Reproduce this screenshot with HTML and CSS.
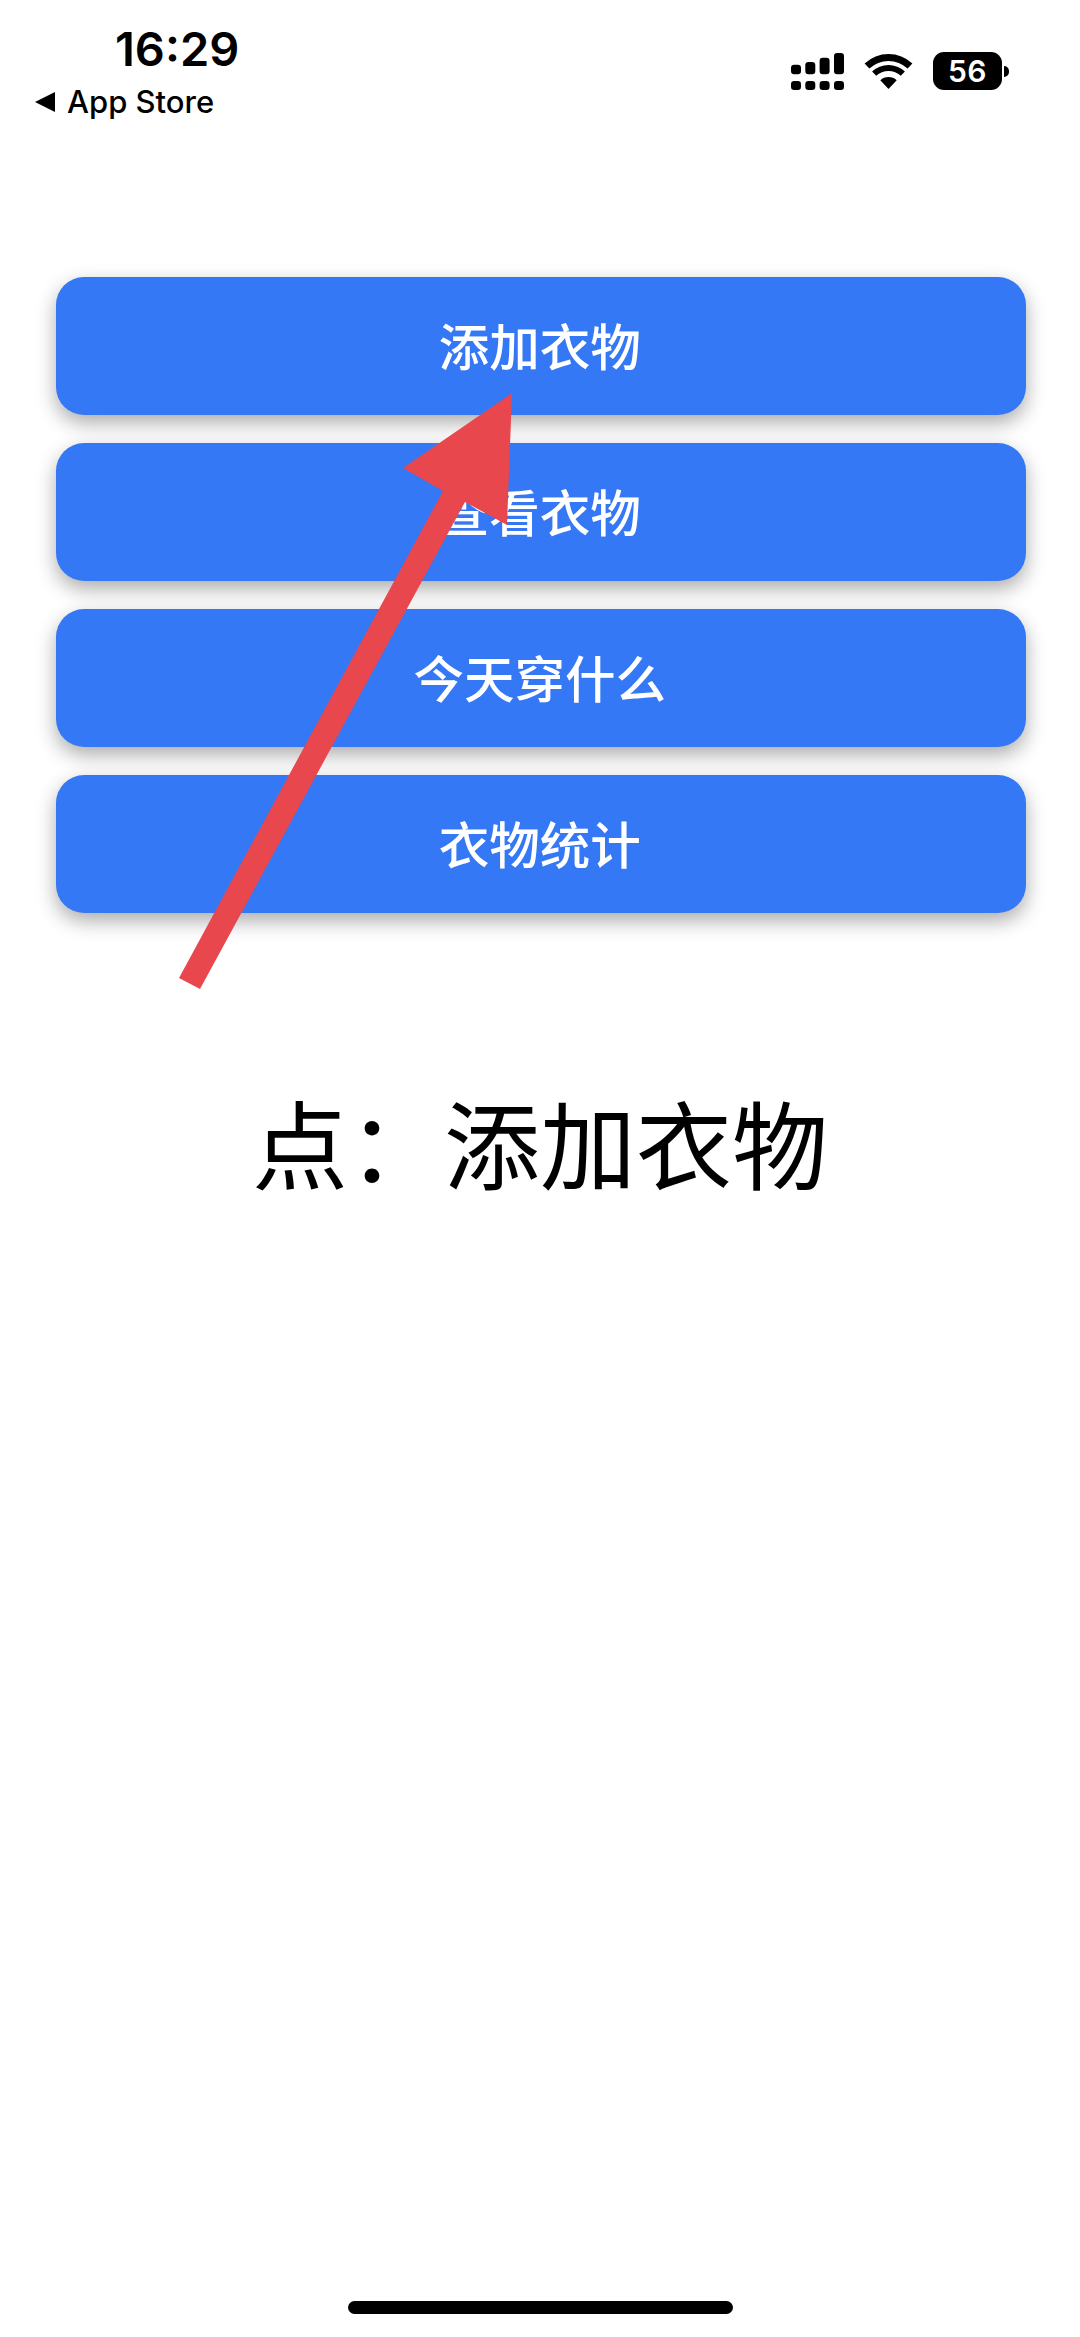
FILE: index.html
```html
<!DOCTYPE html>
<html lang="zh">
<head>
<meta charset="utf-8">
<title>衣物</title>
<link rel="stylesheet" href="styles.css">
</head>
<body>
<div class="screen">
  <header class="status">
    <div class="status-left">
      <div class="time">16:29</div>
      <div class="back"><span class="back-tri"></span><span>App Store</span></div>
    </div>
    <div class="status-right">
      <svg class="signal" viewBox="0 0 53 37" width="53" height="37" aria-hidden="true">
        <rect x="0" y="11.7" width="10" height="9.6" rx="3.2"/>
        <rect x="14.3" y="9" width="10" height="12.3" rx="3.2"/>
        <rect x="28.6" y="4.7" width="10" height="16.6" rx="3.2"/>
        <rect x="43" y="0" width="10" height="21.3" rx="3.2"/>
        <rect x="0" y="28" width="10" height="9" rx="3.2"/>
        <rect x="14.3" y="28" width="10" height="9" rx="3.2"/>
        <rect x="28.6" y="28" width="10" height="9" rx="3.2"/>
        <rect x="43" y="28" width="10" height="9" rx="3.2"/>
      </svg>
      <svg class="wifi" viewBox="0 0 47 35" width="47" height="35" aria-hidden="true">
        <path d="M-.4 9.4A35 35 0 0 1 47.4 9.4L42.6 14.5A28 28 0 0 0 4.4 14.5Z"/>
        <path d="M7.1 17.5A24 24 0 0 1 39.9 17.5L35.8 21.8A18 18 0 0 0 11.2 21.8Z"/>
        <path d="M15.3 26.2A12 12 0 0 1 31.7 26.2L23.5 35Z"/>
      </svg>
      <div class="battery"><div class="battery-body">56</div><div class="battery-nub"></div></div>
    </div>
  </header>

  <main class="menu">
    <button class="menu-btn">添加衣物</button>
    <button class="menu-btn">查看衣物</button>
    <button class="menu-btn">今天穿什么</button>
    <button class="menu-btn">衣物统计</button>
  </main>

  <p class="result">点：添加衣物</p>

  <div class="home-bar"></div>

  <svg class="arrow" viewBox="0 0 1080 2337" aria-hidden="true">
    <polygon points="179,978 200,989 465,502 507,525 512,393 403,468 443,491"/>
  </svg>
</div>
</body>
</html>
```
FILE: styles.css
```css
* { box-sizing: border-box; }
html, body { margin: 0; padding: 0; background: #fff; }
.screen {
  position: relative;
  width: 1080px;
  height: 2337px;
  display: flex;
  flex-direction: column;
  overflow: hidden;
  font-family: "Noto Sans CJK SC", "Noto Sans", sans-serif;
  color: #000;
}
.status {
  height: 277px;
  display: flex;
  justify-content: space-between;
  align-items: flex-start;
  padding: 24px 78px 0 35px;
}
.status-left { display: flex; flex-direction: column; }
.time {
  font-family: Inter, sans-serif;
  font-weight: 600;
  font-size: 47px;
  line-height: 50px;
  padding-left: 80px;
}
.back {
  display: flex;
  align-items: center;
  gap: 12px;
  margin-top: 8px;
  font-family: Inter, sans-serif;
  font-weight: 500;
  font-size: 31px;
  line-height: 40px;
}
.back-tri {
  width: 0;
  height: 0;
  border-style: solid;
  border-width: 10px 20px 10px 0;
  border-color: transparent #000 transparent transparent;
}
.status-right {
  display: flex;
  align-items: center;
  margin-top: 28px;
  gap: 21px;
}
.signal, .wifi { display: block; fill: #000; }
.wifi { overflow: visible; }
.battery { display: flex; align-items: center; gap: 2px; }
.battery-body {
  width: 69px;
  height: 38px;
  border-radius: 11px;
  background: #000;
  color: #fff;
  font-family: Inter, sans-serif;
  font-weight: 600;
  font-size: 30px;
  line-height: 38px;
  text-align: center;
  letter-spacing: 0.5px;
}
.battery-nub {
  width: 5px;
  height: 11px;
  background: #000;
  border-radius: 0 6px 6px 0;
  margin-right: -7px;
}
.menu {
  display: flex;
  flex-direction: column;
  gap: 28px;
  padding: 0 54px 0 55.5px;
}
.menu-btn {
  height: 138px;
  border: 0;
  padding: 0 2px 5px 0;
  border-radius: 28px;
  background: #3478f6;
  color: #fff;
  font-family: "Noto Sans CJK SC", sans-serif;
  font-weight: 500;
  font-size: 50.5px;
  box-shadow: 0 8px 20px rgba(0, 0, 0, 0.33);
}
.result {
  margin: 163px 0 0;
  padding-left: 252px;
  font-size: 96px;
  line-height: 130px;
  white-space: pre;
}
.home-bar {
  width: 385px;
  height: 13px;
  margin: auto 0 23px 348px;
  border-radius: 7px;
  background: #000;
}
.arrow {
  position: absolute;
  inset: 0;
  width: 1080px;
  height: 2337px;
  fill: #e8474d;
  pointer-events: none;
}
```
